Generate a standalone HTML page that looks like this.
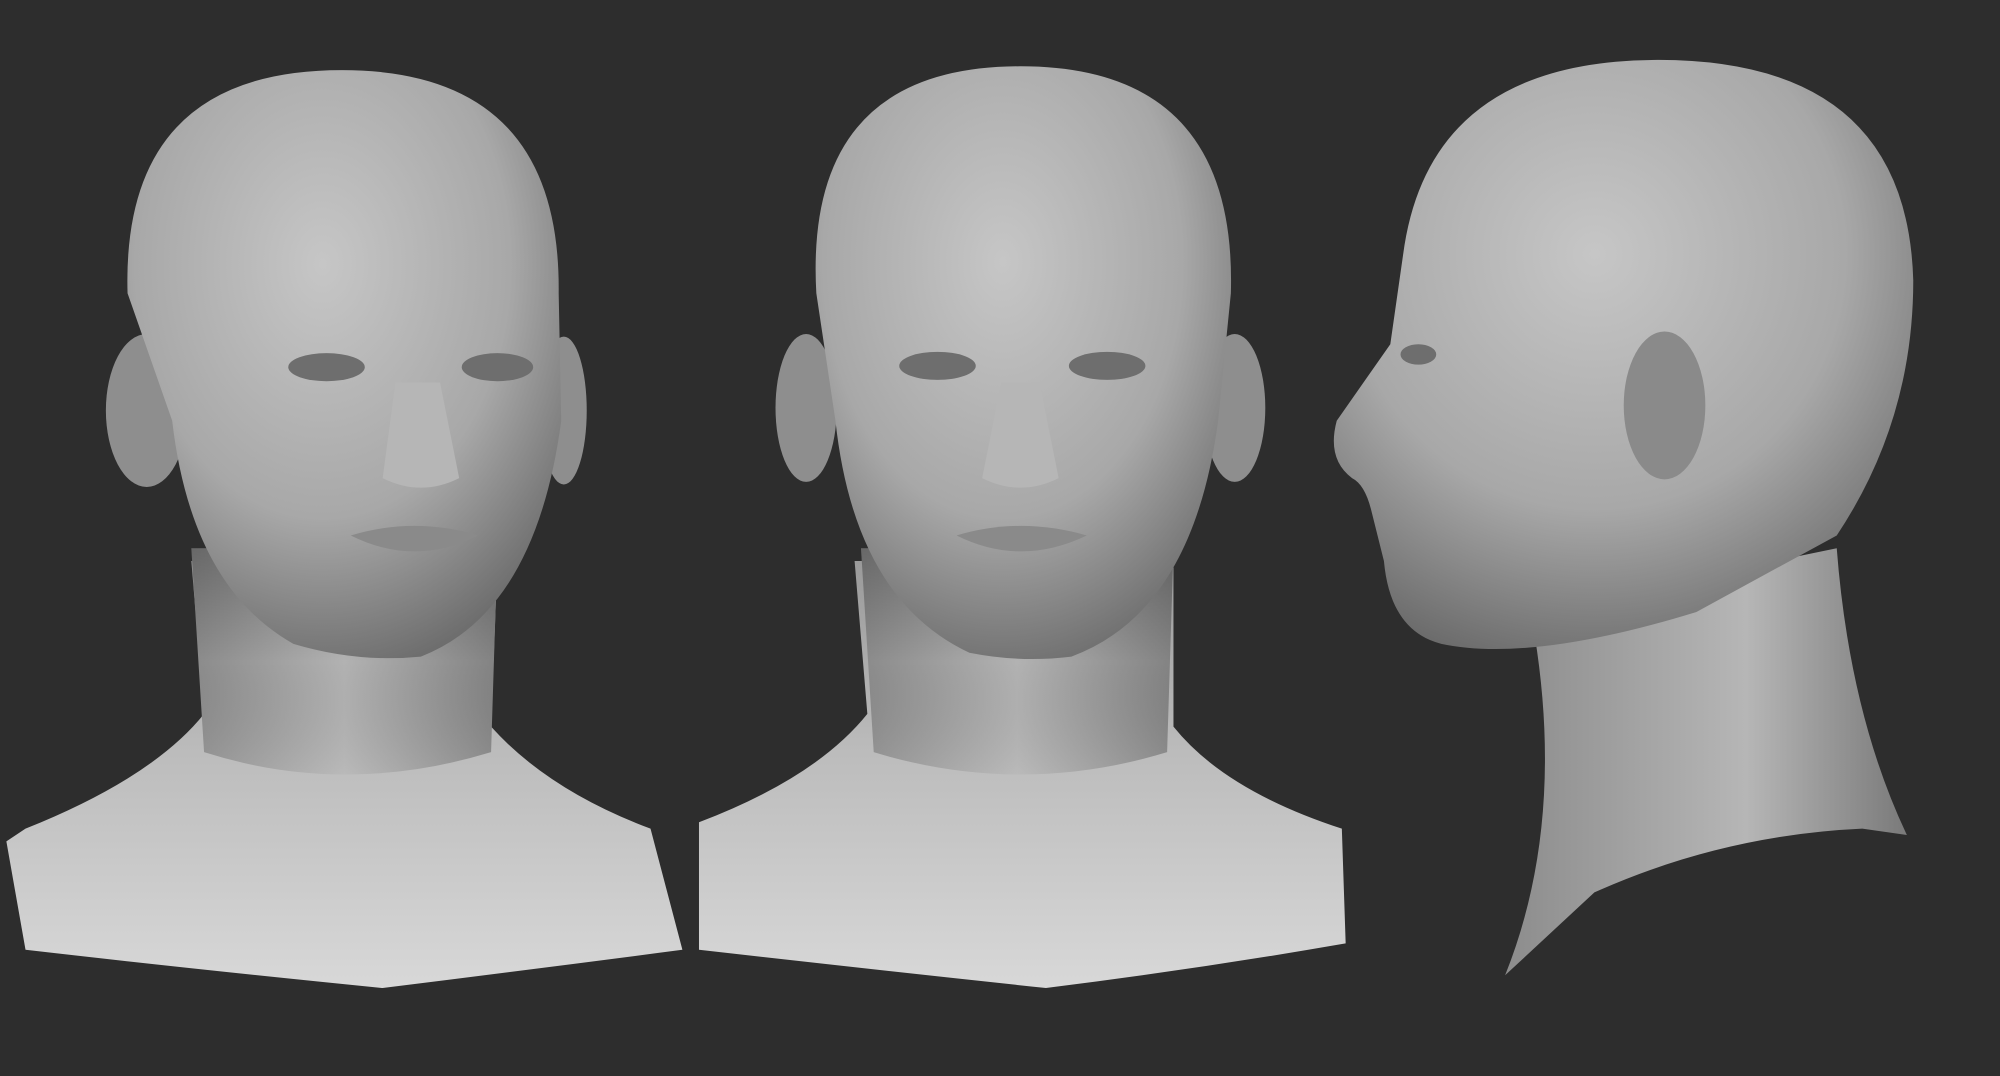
<!DOCTYPE html>
<html><head><meta charset="utf-8"><style>
html,body{margin:0;padding:0;background:#2d2d2d;width:2000px;height:1076px;overflow:hidden}
svg{display:block}
</style></head><body>
<svg width="2000" height="1076" viewBox="0 0 1568 844" preserveAspectRatio="none">
<defs>
<radialGradient id="sk" cx="0.45" cy="0.33" r="0.72">
<stop offset="0" stop-color="#c6c6c6"/><stop offset="0.6" stop-color="#a8a8a8"/><stop offset="1" stop-color="#6a6a6a"/></radialGradient>
<linearGradient id="nk" x1="0" y1="0" x2="1" y2="0">
<stop offset="0" stop-color="#8a8a8a"/><stop offset="0.5" stop-color="#b2b2b2"/><stop offset="1" stop-color="#828282"/></linearGradient>
<linearGradient id="nkv" x1="0" y1="0" x2="0" y2="1">
<stop offset="0" stop-color="#000" stop-opacity="0.25"/><stop offset="0.5" stop-color="#000" stop-opacity="0"/><stop offset="1" stop-color="#fff" stop-opacity="0.1"/></linearGradient>
<linearGradient id="ch" x1="0" y1="0" x2="0" y2="1">
<stop offset="0" stop-color="#9a9a9a"/><stop offset="0.45" stop-color="#bcbcbc"/><stop offset="1" stop-color="#d8d8d8"/></linearGradient>
<linearGradient id="pn" x1="0" y1="0" x2="1" y2="0">
<stop offset="0" stop-color="#8c8c8c"/><stop offset="0.6" stop-color="#b6b6b6"/><stop offset="1" stop-color="#7a7a7a"/></linearGradient>
</defs>
<rect width="1568" height="844" fill="#2d2d2d"/>

<!-- head 1 -->
<path d="M5,660 L20,650 Q120,610 160,560 L150,440 L390,440 L385,570 Q430,620 510,650 L535,745 Q420,760 300,775 Q150,760 20,745 Z" fill="url(#ch)"/>
<path d="M150,430 L390,430 L385,590 Q270,625 160,590 Z" fill="url(#nk)"/>
<path d="M150,430 L390,430 L385,590 Q270,625 160,590 Z" fill="url(#nkv)"/>
<ellipse cx="115" cy="322" rx="32" ry="60" fill="#8e8e8e"/>
<ellipse cx="442" cy="322" rx="18" ry="58" fill="#8e8e8e"/>
<path d="M100,230 Q95,55 268,55 Q440,55 438,230 L440,330 Q420,480 330,515 Q280,520 230,505 Q150,460 135,330 Z" fill="url(#sk)"/>
<ellipse cx="256" cy="288" rx="30" ry="11" fill="#6e6e6e"/>
<ellipse cx="390" cy="288" rx="28" ry="11" fill="#6e6e6e"/>
<path d="M310,300 L300,375 Q330,390 360,375 L345,300 Z" fill="#b6b6b6"/>
<path d="M275,420 Q325,405 375,420 Q325,445 275,420Z" fill="#8a8a8a"/>

<!-- head 2 -->
<path d="M548,645 Q640,610 680,560 L670,440 L920,440 L920,570 Q960,620 1052,650 L1055,740 Q940,760 820,775 Q680,760 548,745 Z" fill="url(#ch)"/>
<path d="M675,430 L920,430 L915,590 Q800,625 685,590 Z" fill="url(#nk)"/>
<path d="M675,430 L920,430 L915,590 Q800,625 685,590 Z" fill="url(#nkv)"/>
<ellipse cx="632" cy="320" rx="24" ry="58" fill="#8e8e8e"/>
<ellipse cx="968" cy="320" rx="24" ry="58" fill="#8e8e8e"/>
<path d="M640,230 Q630,52 800,52 Q970,52 965,230 L955,330 Q935,480 840,515 Q800,520 760,512 Q670,470 655,330 Z" fill="url(#sk)"/>
<ellipse cx="735" cy="287" rx="30" ry="11" fill="#6e6e6e"/>
<ellipse cx="868" cy="287" rx="30" ry="11" fill="#6e6e6e"/>
<path d="M785,300 L770,375 Q800,390 830,375 L815,300 Z" fill="#b6b6b6"/>
<path d="M750,420 Q800,405 852,420 Q800,445 750,420Z" fill="#8a8a8a"/>

<!-- head 3 profile -->
<path d="M1200,480 L1440,430 Q1450,560 1495,655 L1460,650 Q1350,655 1250,700 L1180,765 Q1230,640 1200,480 Z" fill="url(#pn)"/>
<path d="M1100,200 Q1120,47 1300,47 Q1495,47 1500,220 Q1500,330 1440,420 L1330,480 Q1200,520 1130,505 Q1090,495 1085,440 L1075,400 Q1070,380 1060,375 Q1040,360 1048,330 L1090,270 Z" fill="url(#sk)"/>
<ellipse cx="1305" cy="318" rx="32" ry="58" fill="#8a8a8a"/>
<ellipse cx="1112" cy="278" rx="14" ry="8" fill="#6e6e6e"/>
</svg>
</body></html>
